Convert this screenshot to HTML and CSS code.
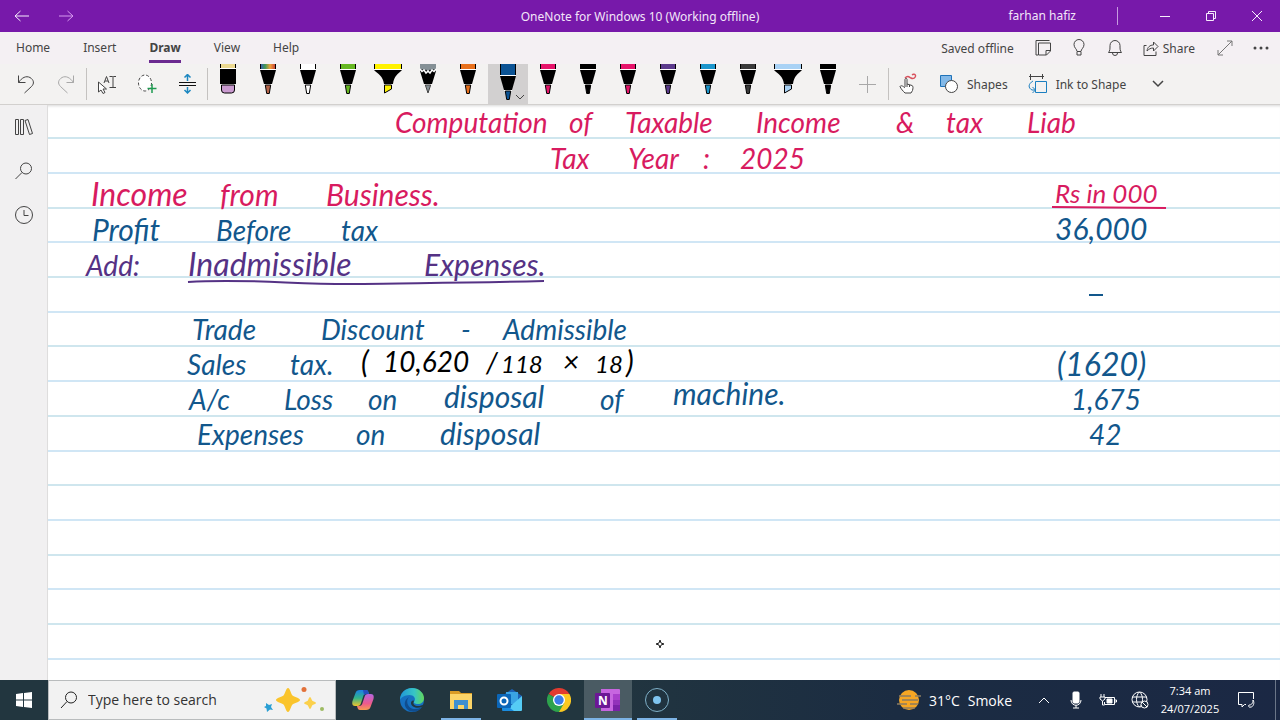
FILE: index.html
```
<!DOCTYPE html>
<html lang="en">
<head>
	<meta charset="UTF-8">
	<title>OneNote for Windows 10</title>
	<link rel="stylesheet" href="styles.css">
</head>
<body>

	<!-- shared pen shapes, the cap and the tip take the colour of the button -->
	<svg class="defs" width="0" height="0">
		<defs>
			<linearGradient id="rainbow"><stop offset="0" stop-color="#3a62a8"/><stop offset=".3" stop-color="#3f9a55"/><stop offset=".65" stop-color="#f0a03a"/><stop offset="1" stop-color="#c8483a"/></linearGradient>
			<symbol id="pen" viewBox="0 0 28 32">
				<path d="M6 0h16v5H6z"/><path d="M7 0h14v5H7z" fill="currentColor"/>
				<path d="M6 5h16v1H6zM10 20h8v1h-8z" fill="#fff"/>
				<path d="M6 6h16l-4 14h-8z"/>
				<path d="M11.3 21h5.4l-1.4 8.5h-2.6z" fill="currentColor" stroke="#000"/>
			</symbol>
			<symbol id="pen-long" viewBox="0 0 28 38">
				<path d="M6 0h16v11H6z"/><path d="M7 0h14v11H7z" fill="currentColor"/>
				<path d="M6 11h16v1H6zM10 26h8v1h-8z" fill="#fff"/>
				<path d="M6 12h16l-4 14h-8z"/>
				<path d="M11.3 27h5.4l-1.4 8.5h-2.6z" fill="currentColor" stroke="#000"/>
			</symbol>
			<symbol id="marker" viewBox="0 0 28 32">
				<path d="M0 0h28v5H0z"/><path d="M1 0h26v5H1z" fill="currentColor"/>
				<path d="M0 5h28v1H0z" fill="#fff"/>
				<path d="M0 6h28c-4 4-8 6-9 14h-9C9 12 4 10 0 6z"/>
				<path d="M10.5 21h7v4l-7 4z" fill="currentColor" stroke="#000"/>
			</symbol>
		</defs>
	</svg>

	<div class="window">
		<header class="titlebar">
			<button class="nav-btn" aria-label="Back"><svg width="16" height="14" viewBox="0 0 16 14"><path d="M1 7h14M6.500 2L1 7l5.500 5"/></svg></button>
			<button class="nav-btn forward" aria-label="Forward"><svg width="16" height="14" viewBox="0 0 16 14"><path d="M1 7h14M9.500 2L15 7l-5.500 5"/></svg></button>
			<h1 class="title">OneNote for Windows 10 (Working offline)</h1>
			<div class="title-right">
				<span class="user">farhan hafiz</span>
				<button class="win-btn" aria-label="Minimize"><svg width="12" height="12" viewBox="0 0 12 12"><path d="M1 6.500h10"/></svg></button>
				<button class="win-btn" aria-label="Restore"><svg width="12" height="12" viewBox="0 0 12 12"><path d="M1.500 3.500h7v7h-7zM3.500 3.500v-2h7v7h-2"/></svg></button>
				<button class="win-btn" aria-label="Close"><svg width="12" height="12" viewBox="0 0 12 12"><path d="M1 1l10 10M11 1L1 11"/></svg></button>
			</div>
		</header>

		<div class="menubar">
			<nav class="tabs">
				<a href="#">Home</a>
				<a href="#">Insert</a>
				<a href="#" class="active">Draw</a>
				<a href="#">View</a>
				<a href="#">Help</a>
			</nav>
			<div class="menu-right">
				<span class="saved">Saved offline</span>
				<button class="menu-btn" aria-label="Feed"><svg width="16" height="16" viewBox="0 0 16 16"><path d="M3 15H1V.5h13.500M3.500 3h12v8l-4 4h-8zM15.500 10.500h-4.500V15"/></svg></button>
				<button class="menu-btn" aria-label="Tell me"><svg width="14" height="18" viewBox="0 0 14 18"><path d="M5 12.500c0-2.500-3-3.500-3-7a5 5 0 0 1 10 0c0 3.500-3 4.500-3 7zM5 13v3h4v-3"/></svg></button>
				<button class="menu-btn" aria-label="Notifications"><svg width="16" height="18" viewBox="0 0 16 18"><path d="M1.500 13.500c1.500-2 1.500-3 1.500-7a5 5 0 0 1 10 0c0 4 0 5 1.500 7zM5.500 14a2.500 2.500 0 0 0 5 0"/></svg></button>
				<button class="share"><svg width="16" height="16" viewBox="0 0 16 16"><path d="M3.500 5.500h-2.500v10h12v-4M4 11c.5-4 3-6 6.500-6V2L15 6.500 10.500 11V8C7.500 8 6 9 4 11z"/></svg>Share</button>
				<button class="menu-btn" aria-label="Full screen"><svg class="grey" width="16" height="16" viewBox="0 0 16 16"><path d="M1 15L15 1M10 1h5v5M1 10v5h5"/></svg></button>
				<button class="menu-btn" aria-label="More"><svg width="16" height="4" viewBox="0 0 16 4"><g fill="#444" stroke="none"><circle cx="2" cy="2" r="1.500"/><circle cx="8" cy="2" r="1.500"/><circle cx="14" cy="2" r="1.500"/></g></svg></button>
			</div>
		</div>

		<div class="toolbar">
			<button class="tool" aria-label="Undo"><svg width="18" height="20" viewBox="0 0 18 20"><path d="M1.500 1.500v7h7M1.500 8.500C5 3.500 9 1.500 13 3.500c4 2.500 4.500 6 1.500 9L7.500 19"/></svg></button>
			<button class="tool" aria-label="Redo"><svg class="pale" width="18" height="20" viewBox="0 0 18 20"><path d="M16.500 1.500v7h-7M16.500 8.500C13 3.500 9 1.500 5 3.500c-4 2.500-4.500 6-1.500 9L10.500 19"/></svg></button>
			<span class="sep"></span>
			<button class="tool" aria-label="Select objects or type text"><svg width="20" height="20" viewBox="0 0 20 20"><path d="M1.500 8v10l2.500-2 2 3.500 2-1-2-3.500h3.500z" fill="#fff"/><path d="M7 9l2.500-6.500L12 9M8 7h3M12.500 2.500h3c.5 0 .5.500.5.500v10.500M19 2.500h-2.500c-.5 0-.5.500-.5.500M12.500 13.500H19"/></svg></button>
			<button class="tool" aria-label="Lasso select"><svg width="20" height="20" viewBox="0 0 20 20"><ellipse cx="8" cy="9" rx="6.500" ry="8" stroke-dasharray="3 2" fill="#fff"/><path d="M15 10v9M10.500 14.500h9" stroke="#1e9a50" stroke-width="1.500"/></svg></button>
			<button class="tool" aria-label="Insert space"><svg width="18" height="20" viewBox="0 0 18 20"><path d="M1 8.500h17M1 11.500h17" stroke="#111"/><path d="M9.500 7V1M6.500 3.500l3-3 3 3M9.500 13v6M6.500 16l3 3 3-3" stroke="#1b87c0" stroke-width="1.500"/></svg></button>
			<span class="sep"></span>
			<div class="pens">
				<button class="pen" aria-label="Eraser"><svg width="28" height="32" viewBox="0 0 28 32"><path d="M6 0h16v4H6z"/><path d="M7 0h14v4H7z" fill="#ecd990"/><path d="M6 4h16v1H6z" fill="#fff"/><path d="M6 5h16v15H6z"/><path d="M7.500 21h13v5q0 3-3 3h-7q-3 0-3-3z" fill="#ca9bd0" stroke="#000"/></svg></button>
				<button class="pen" aria-label="Galaxy pen"><svg width="28" height="32" viewBox="0 0 28 32"><path d="M6 0h16v5H6z"/><path d="M7 0h14v5H7z" fill="url(#rainbow)"/><path d="M6 5h16v1H6zM10 20h8v1h-8z" fill="#fff"/><path d="M6 6h16l-4 14h-8z"/><path d="M11.300 21h5.400l-1.400 8.500h-2.600z" fill="#b5654a" stroke="#000"/></svg></button>
				<button class="pen white" aria-label="White pen"><svg width="28" height="32"><use href="#pen"/></svg></button>
				<button class="pen green" aria-label="Green pen"><svg width="28" height="32"><use href="#pen"/></svg></button>
				<button class="pen yellow" aria-label="Yellow highlighter"><svg width="28" height="32"><use href="#marker"/></svg></button>
				<button class="pen" aria-label="Pencil"><svg width="28" height="32" viewBox="0 0 28 32"><path d="M6 0h16v7H6z" fill="#859096"/><path d="M6 7l2-2 2 2 2-1.500L14 8l2-2.500L18 7l2-2 2 2-4 13h-8z"/><path d="M6 5l2 2.500L10 6l2 3 2-2 2 2 2-3 2 1.500L22 5" fill="none" stroke="#fff" stroke-width="1.500"/><path d="M11.300 21h5.400L14 29z" fill="#859096" stroke="#444"/></svg></button>
				<button class="pen orange" aria-label="Orange pen"><svg width="28" height="32"><use href="#pen"/></svg></button>
				<button class="pen blue selected" aria-label="Blue pen" aria-pressed="true"><svg width="28" height="38"><use href="#pen-long"/></svg><svg class="pen-more" width="10" height="6" viewBox="0 0 10 6"><path d="M1 1l4 4 4-4" fill="none" stroke="#444"/></svg></button>
				<button class="pen pink" aria-label="Pink pen"><svg width="28" height="32"><use href="#pen"/></svg></button>
				<button class="pen black" aria-label="Black pen"><svg width="28" height="32"><use href="#pen"/></svg></button>
				<button class="pen pink" aria-label="Pink pen, thin"><svg width="28" height="32"><use href="#pen"/></svg></button>
				<button class="pen purple" aria-label="Purple pen"><svg width="28" height="32"><use href="#pen"/></svg></button>
				<button class="pen sky" aria-label="Sky blue pen"><svg width="28" height="32"><use href="#pen"/></svg></button>
				<button class="pen grey-ink" aria-label="Grey pen"><svg width="28" height="32"><use href="#pen"/></svg></button>
				<button class="pen light" aria-label="Light blue highlighter"><svg width="28" height="32"><use href="#marker"/></svg></button>
				<button class="pen black" aria-label="Black pen, thin"><svg width="28" height="32"><use href="#pen"/></svg></button>
			</div>
			<button class="tool" aria-label="Add pen"><svg class="pale" width="18" height="18" viewBox="0 0 18 18"><path d="M8.500 1v17M0 9.500h17"/></svg></button>
			<span class="sep"></span>
			<button class="tool touch" aria-label="Draw with touch"><svg width="20" height="22" viewBox="0 0 20 22"><path d="M7 14V6.500c0-1.500 2-1.500 2 0V11l5 1.500c1.500.5 1 3 .5 5L13 20H7c-2-2-4-4-5-6.500 1-1.500 3-.5 5 1.500M9 11v3M11.500 12v2" fill="#fff"/><path d="M7 5c3-3 4-1 6 0s5 0 4.500-2.500S14 2 14 2" stroke="#d8525e" stroke-width="1.500"/></svg></button>
			<button class="tool-text shapes"><svg width="20" height="20" viewBox="0 0 20 20"><path d="M1.500 1.500h11v11h-11z" fill="#83b9e8" stroke="#1f72b8"/><circle cx="12.500" cy="12.500" r="6" fill="#fff"/></svg>Shapes</button>
			<button class="tool-text ink-shape"><svg width="20" height="20" viewBox="0 0 20 20"><path d="M2.500 0v6M14.500 0v5M1 2.500h15"/><path d="M7.500 7.500h11v11h-11zM5 7c-5 3-5 7-1 9h3M4.500 13l3 3-3 3" stroke="#1b7fc0"/></svg>Ink to Shape</button>
			<button class="tool" aria-label="More drawing tools"><svg width="12" height="8" viewBox="0 0 12 8"><path d="M1 1l5 5 5-5" stroke-width="1.500"/></svg></button>
		</div>

		<div class="workspace">
			<aside class="sidebar">
				<button aria-label="Show notebooks"><svg width="20" height="18" viewBox="0 0 20 18"><path d="M1.500 1.500h3v15h-3zM6.500 1.500h3v15h-3zM11 2.500l3-1 4.500 14-3 1z"/></svg></button>
				<button aria-label="Search notes"><svg width="20" height="20" viewBox="0 0 20 20"><circle cx="12" cy="7.500" r="5.500"/><path d="M8 11.500L1.500 18"/></svg></button>
				<button aria-label="Recent notes"><svg width="20" height="20" viewBox="0 0 20 20"><circle cx="10" cy="10" r="8.500"/><path d="M10 5v5.500h4.500"/></svg></button>
			</aside>

			<main class="page">
				<!-- the note page: ruled lines, then the ink placed freely on them -->
				<svg class="canvas" width="100%" height="100%">
					<g class="rules">
						<line x2="100%" y1="33" y2="33"/><line x2="100%" y1="68" y2="68"/>
						<line x2="100%" y1="103" y2="103"/><line x2="100%" y1="137" y2="137"/>
						<line x2="100%" y1="172" y2="172"/><line x2="100%" y1="207" y2="207"/>
						<line x2="100%" y1="241" y2="241"/><line x2="100%" y1="276" y2="276"/>
						<line x2="100%" y1="311" y2="311"/><line x2="100%" y1="346" y2="346"/>
						<line x2="100%" y1="380" y2="380"/><line x2="100%" y1="415" y2="415"/>
						<line x2="100%" y1="450" y2="450"/><line x2="100%" y1="484" y2="484"/>
						<line x2="100%" y1="519" y2="519"/><line x2="100%" y1="554" y2="554"/>
					</g>
					<g class="ink ink-pink">
						<text x="347" y="28">Computation</text><text x="521" y="28">of</text><text x="577" y="28">Taxable</text><text x="708" y="28">Income</text><text x="848" y="28">&amp;</text><text x="898" y="28">tax</text><text x="979" y="28">Liab</text>
						<text x="502" y="64">Tax</text><text x="580" y="64">Year</text><text x="655" y="64">:</text><text x="692" y="64">2025</text>
						<text class="tall" x="43" y="101">Income</text><text class="big" x="172" y="101">from</text><text class="big" x="278" y="101">Business.</text>
						<text class="small" x="1007" y="98">Rs in 000</text>
						<path d="M1004 102l114 1"/>
					</g>
					<g class="ink ink-blue">
						<text class="big" x="44" y="136">Profit</text><text x="168" y="136">Before</text><text x="293" y="136">tax</text><text class="big" x="1007" y="135">36,000</text>
						<path d="M1041 190h14"/>
						<text x="144" y="235">Trade</text><text x="273" y="235">Discount</text><text x="413" y="235">-</text><text x="455" y="235">Admissible</text>
						<text x="139" y="270">Sales</text><text x="242" y="270">tax.</text><text class="tall" x="1009" y="271">(1620)</text>
						<text x="141" y="305">A/c</text><text x="236" y="305">Loss</text><text x="320" y="305">on</text><text class="big" x="396" y="303">disposal</text><text x="552" y="305">of</text><text class="big" x="625" y="300">machine.</text><text x="1023" y="305">1,675</text>
						<text x="149" y="340">Expenses</text><text x="308" y="340">on</text><text class="big" x="392" y="340">disposal</text><text x="1041" y="340">42</text>
					</g>
					<g class="ink ink-purple">
						<text x="38" y="171">Add:</text><text class="tall" x="140" y="171">Inadmissible</text><text class="big" x="376" y="171">Expenses.</text>
						<path d="M140 177c60-4 110 3 170 2s110-1 186-3"/>
					</g>
					<g class="ink ink-black">
						<text class="big" x="313" y="268">(</text><text x="335" y="267">10,620</text><text x="438" y="268">/</text><text class="digits" x="453" y="268">118</text><text x="515" y="267">×</text><text class="digits" x="547" y="268">18</text><text class="big" x="578" y="268">)</text>
					</g>
					<path class="cursor" d="M612 535l1 3 3 1-3 1-1 3-1-3-3-1 3-1z"/>
				</svg>
			</main>
		</div>
	</div>

	<footer class="taskbar">
		<button class="start" aria-label="Start"><svg width="16" height="16" viewBox="0 0 16 16"><path d="M0 2l7-1v6.500H0zM8 1l8-1v7.500H8zM0 8.500h7V15l-7-1zM8 8.500h8V16l-8-1z" fill="#fff"/></svg></button>
		<label class="search">
			<svg width="18" height="18" viewBox="0 0 18 18"><circle cx="11" cy="6.500" r="5.500"/><path d="M7 10.500L1 17"/></svg>
			<input type="text" placeholder="Type here to search" aria-label="Type here to search">
			<svg class="sparkle" width="62" height="26" viewBox="0 0 62 26">
				<path d="M24 1c2 0 3 6 4.500 7.500S36 11 36 13s-6 3-7.500 4.500S26 25 24 25s-3-6-4.500-7.500S12 15 12 13s6-3 7.500-4.500S22 1 24 1z" fill="#fac42c"/>
				<path d="M46 10c1 0 1.500 3 2.300 3.700S52 15 52 16s-3 1.500-3.700 2.300S47 22 46 22s-1.500-3-2.300-3.700S40 17 40 16s3-1.500 3.700-2.300S45 10 46 10z" fill="#fbd04c"/>
				<path d="M2 16l3 2 3-1-1 3 2 3-3-.5L3 25l-.5-3.500L0 20l2-1z" fill="#2a9fd4"/>
				<circle cx="40" cy="2.500" r="2.500" fill="#e2713b"/><circle cx="58" cy="22" r="2" fill="#9dbb62"/>
			</svg>
		</label>

		<div class="apps">
			<button class="app" aria-label="Copilot"><svg width="24" height="24" viewBox="0 0 24 24">
				<defs><linearGradient id="cpl" x2="0" y2="1"><stop offset="0" stop-color="#1c7fe6"/><stop offset=".5" stop-color="#31b58a"/><stop offset="1" stop-color="#f2c52c"/></linearGradient><linearGradient id="cpr" x2="0" y2="1"><stop offset="0" stop-color="#b566e0"/><stop offset=".6" stop-color="#ee5a8c"/><stop offset="1" stop-color="#f79b50"/></linearGradient></defs>
				<path d="M9 2h6c2 0 2.500 2 3 4h-3c-2 0-2.500 1-3 3l-2 6c-.5 2-1.500 3-3.500 3H4c-3 0-3-3-2.500-5l3-8C5 3 6.500 2 9 2z" fill="url(#cpl)"/>
				<path d="M15 22H9c-2 0-2.500-2-3-4h2c2 0 3-1 3.500-3l2-6C14 7 15 6 17 6h3c3 0 3 3 2.500 5l-3 8c-.5 2-2 3-4.500 3z" fill="url(#cpr)"/>
				<path d="M12 2h3c2 0 2.500 2 3 4h-3l-2 1z" fill="#254fc0"/></svg></button>
			<button class="app" aria-label="Edge"><svg width="24" height="24" viewBox="0 0 24 24">
				<defs><linearGradient id="edg"><stop offset="0" stop-color="#2097d8"/><stop offset=".6" stop-color="#37c5c5"/><stop offset="1" stop-color="#63d75a"/></linearGradient></defs>
				<circle cx="12" cy="12" r="12" fill="#1670c0"/>
				<path d="M0 12C0 5 5 0 12 0s12 5 12 10c0 4-3 6-6 6-3.500 0-5-1-3.500-3 1.500-3-1-6-5-6-5 0-9 3-9.500 5z" fill="url(#edg)"/>
				<path d="M9 9c-4 4-1 12 6 12 3 0 5-1 7-2-3 5-10 6-14 3-5-4-4-10 1-13z" fill="#104d8e"/>
				<path d="M14 13c-2 3 1 5 4 5 2 0 4-.5 6-2l-2 3c-5 2-11 0-11-4 0-2 2-3 3-2z" fill="#22363f"/></svg></button>
			<button class="app open" aria-label="File Explorer"><svg width="24" height="20" viewBox="0 0 24 20"><path d="M1 1h9l2 2h11v3H1z" fill="#d99b25"/><path d="M1 4h22v15H1z" fill="#fbd468"/><path d="M5 10h14v9h-4v-4H9v4H5z" fill="#3f8fd0"/></svg></button>
			<button class="app" aria-label="Outlook"><svg width="26" height="24" viewBox="0 0 26 24"><path d="M5 8l10-7 10 7v14H5z" fill="#1c62b8"/><path d="M9 4h12v12H9z" fill="#3aa3e4"/><path d="M25 8v14q0 1-1 1H8z" fill="#55ccf5"/><path d="M5 14l12 9H6q-1 0-1-1z" fill="#1a8ce0"/><rect x="0" y="6" width="14" height="14" rx="1" fill="#0b66b8"/><circle cx="7" cy="13" r="3.500" fill="none" stroke="#fff" stroke-width="2"/></svg></button>
			<button class="app" aria-label="Chrome"><svg width="24" height="24" viewBox="0 0 24 24"><path d="M12 12L1.600 6A12 12 0 0 1 22.400 6z" fill="#e13b30"/><path d="M12 12L22.400 6A12 12 0 0 1 12 24z" fill="#fbc921"/><path d="M12 12v12A12 12 0 0 1 1.600 6z" fill="#2da24c"/><path d="M12 6h10.400l-5.200 9z" fill="#fbc921"/><path d="M17.200 15L12 24l-5.200-9z" fill="#2da24c"/><circle cx="12" cy="12" r="6" fill="#fff"/><circle cx="12" cy="12" r="4.700" fill="#3a7de8"/></svg></button>
			<button class="app current" aria-label="OneNote"><svg width="26" height="24" viewBox="0 0 26 24"><path d="M6 1h18q1 0 1 1v20q0 1-1 1H6z" fill="#c765e0"/><path d="M18 6h7v6h-7z" fill="#a93fcb"/><path d="M18 12h7v5h-7z" fill="#9332bb"/><path d="M18 17h7v6h-7z" fill="#7a22a8"/><rect x="0" y="5" width="15" height="15" rx="1" fill="#6c1795"/><text x="3" y="17">N</text></svg></button>
			<button class="app open" aria-label="Recorder"><svg width="26" height="26" viewBox="0 0 26 26"><circle cx="13" cy="13" r="11.500" fill="none" stroke="#7fb0c8"/><circle cx="13" cy="13" r="4" fill="#7fc4ef"/></svg></button>
		</div>

		<div class="tray">
			<button class="weather"><svg width="24" height="24" viewBox="0 0 24 24"><circle cx="12" cy="12" r="10" fill="#f6a623"/><path d="M2 8h12M18 8h6M5 12h16M0 16h10M13 16h8M6 20h12" stroke="#8c7c62" stroke-width="1.500"/></svg><span>31°C</span><span>Smoke</span></button>
			<button class="tray-btn" aria-label="Show hidden icons"><svg width="12" height="8" viewBox="0 0 12 8"><path d="M1 7l5-5 5 5"/></svg></button>
			<button class="tray-btn" aria-label="Microphone"><svg width="12" height="18" viewBox="0 0 12 18"><rect x="3" y="1" width="6" height="11" rx="1" fill="#fff"/><path d="M1 9c0 7 10 7 10 0M6 14v3M3 17h6"/></svg></button>
			<button class="tray-btn" aria-label="Battery"><svg width="18" height="14" viewBox="0 0 18 14"><path d="M6 4.500h9.500v7h-10V9M15.500 7h2v2h-2M2 1v3M5 1v3M1 4h5v2L3.500 8 1 6zM3.500 8v4h2"/><path d="M8 6h5v4H8z" fill="#fff"/></svg></button>
			<button class="tray-btn" aria-label="Network"><svg width="18" height="18" viewBox="0 0 18 18"><circle cx="8.500" cy="8.500" r="7.500"/><path d="M1 6h15M1 11h15M8.500 1c-4 3-4 12 0 15M8.500 1c4 3 4 12 0 15"/><circle cx="13.500" cy="13.500" r="3.500" fill="#1b2c42"/><path d="M11 11l5 5"/></svg></button>
			<time class="clock"><span>7:34 am</span><span>24/07/2025</span></time>
			<button class="tray-btn note" aria-label="Notifications"><svg width="18" height="18" viewBox="0 0 18 18"><path d="M9 13.500H7.500L5 16v-2.500H1.500v-12h15V8M12 14c2 0 4-1 4-5 2 3 0 7-2 7-2 1-3-1-2-2z"/></svg></button>
		</div>
	</footer>

</body>
</html>
```
FILE: styles.css
```
* { box-sizing: border-box; }
body { margin: 0; height: 100vh; display: flex; flex-direction: column; overflow: hidden; font-family: "Open Sans", "Noto Sans", sans-serif; font-size: 12px; color: #444; background: #fff;}
button { border: 0; padding: 0; margin: 0; background: none; font: inherit; color: inherit; display: flex; align-items: center; justify-content: center;}
svg { display: block; flex: none;}
.defs { position: absolute;}

.window { flex: 1; min-height: 0; display: flex; flex-direction: column; font-family: "Noto Sans", "Open Sans", sans-serif;}

/* title bar */
.titlebar { height: 32px; flex: none; display: grid; grid-template-columns: 1fr auto 1fr; grid-template-rows: 32px; background: #7719aa; color: #f3e6f9;}
.titlebar svg { fill: none; stroke: #f7ecfc;}
.nav-btn { width: 44px; height: 32px; grid-row: 1; grid-column: 1;}
.forward { margin-left: 44px;}
.forward svg { stroke: #d79af0;}
.title { margin: 0; font-size: 12px; line-height: 34px; font-weight: normal; grid-column: 2;}
.title-right { grid-column: 3; display: flex; justify-content: flex-end; align-items: center;}
.user { line-height: 18px; padding-right: 41px; border-right: 1px solid #c79be0; margin-right: 24px;}
.win-btn { width: 46px; height: 32px;}

/* tabs */
.menubar { height: 32px; flex: none; display: flex; justify-content: space-between; background: #f4f0f3;}
.menubar svg { fill: none; stroke: #444;}
.menubar svg.grey { stroke: #777;}
.tabs { display: flex; gap: 33px; padding-left: 16px;}
.tabs a { color: #444; text-decoration: none; line-height: 32px; height: 31px;}
.tabs .active { font-weight: bold; border-bottom: 3px solid #6b2a90;}
.menu-right { display: flex; align-items: center; padding-right: 1px;}
.saved { margin-right: 11px;}
.menu-btn { width: 36px; height: 32px;}
.share { gap: 4px; margin: 0 12px 0 10px; height: 32px;}

/* drawing tools */
.toolbar { height: 41px; flex: none; display: flex; background: #f3f2f1; border-bottom: 1px solid #d2d0ce; padding-left: 6px;}
.tool { width: 40px; height: 40px;}
.tool svg, .tool-text svg { fill: none; stroke: #444;}
.tool svg.pale { stroke: #a8a8a8;}
.touch { width: 38px;}
.sep { width: 1px; height: 32px; margin-top: 4px; background: #c4c2c0;}
.pens { display: flex;}
.pen { width: 40px; height: 40px; align-items: flex-start; position: relative;}
.tool-text { gap: 8px; height: 40px; margin-left: 12px;}
.ink-shape { margin: 0 12px 0 20px;}
.selected { background: #d2d0d0;}
.pen-more { position: absolute; right: 3px; bottom: 4px;}
.white { color: #fff;}
.green { color: #66b821;}
.yellow { color: #fff200;}
.orange { color: #e8701c;}
.blue { color: #0b5394;}
.pink { color: #e6146a;}
.black { color: #000;}
.purple { color: #5b3a8c;}
.sky { color: #1b96cc;}
.grey-ink { color: #3a3a3a;}
.light { color: #a9d2f5;}

/* page */
.workspace { flex: 1; min-height: 0; display: flex;}
.sidebar { width: 48px; flex: none; background: #f1f0f1; border-right: 1px solid #dedddd;}
.sidebar button { width: 47px; height: 44px;}
.sidebar svg { fill: none; stroke: #444;}
.page { flex: 1; min-width: 0; background: #fff; box-shadow: inset 0 3px 3px -2px #d8d8d8;}
.rules line { stroke: #cfe6ee; stroke-width: 2;}
.rules line:nth-child(even) { stroke: #d0e6f5;}

.ink { font-family: Lato, "Liberation Sans", sans-serif; font-style: italic; font-size: 28px;}
.ink path { fill: none; stroke-width: 2; stroke: currentColor;}
.ink text { fill: currentColor;}
.ink .tall { font-size: 32px;}
.ink .big { font-size: 30px;}
.ink .small { font-size: 26px;}
.ink .digits { font-size: 24px;}
.ink-pink { color: #d81b60;}
.ink-blue { color: #12578c;}
.ink-purple { color: #553285;}
.ink-black { color: #000;}
.cursor { fill: #fff; stroke: #222;}

/* windows taskbar */
.taskbar { height: 40px; flex: none; display: flex; background: linear-gradient(90deg, #22363f 0%, #22363f 45%, #1b2c42 70%, #1b2844 100%); color: #fff;}
.start { width: 48px;}
.search { width: 288px; display: flex; align-items: center; padding: 0 9px 0 11px; background: #f2f2f2; border: 1px solid #b9bcbd; color: #333;}
.search svg { fill: none; stroke: #222; stroke-width: 1;}
.search .sparkle { stroke: none;}
.search input { flex: 1; min-width: 0; border: 0; padding: 0 0 0 10px; background: none; outline: none; font: inherit; font-size: 14px; line-height: 20px;}
.search input::placeholder { color: #333; opacity: 1;}
.apps { display: flex; margin-left: 3px;}
.app { width: 48px; height: 40px; margin-right: 1px; position: relative;}
.app text { font-size: 12px; font-weight: bold; fill: #fff;}
.open::after, .current::after { content: ""; position: absolute; left: 4px; right: 4px; bottom: 0; height: 2px; background: #7db4e6;}
.current { background: #4a5b63;}
.current::after { left: 0; right: 0;}
.tray { margin-left: auto; display: flex; align-items: center; padding-right: 4px;}
.tray svg { fill: none; stroke: #fff;}
.weather { gap: 8px; height: 40px; margin-right: 16px; font-size: 14px;}
.weather svg { stroke: none;}
.tray-btn { width: 32px; height: 40px;}
.clock { display: flex; flex-direction: column; align-items: center; width: 68px; line-height: 18px; font-size: 11px;}
.note { width: 52px; padding-right: 7px; border-right: 1px solid #6b7688;}
```
